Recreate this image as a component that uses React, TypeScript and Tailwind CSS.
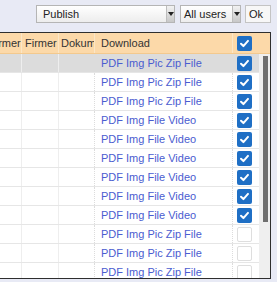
import React from "react";

const rows: { t: string; c: boolean; sel?: boolean }[] = [
  { t: "PDF Img Pic Zip File", c: true, sel: true },
  { t: "PDF Img Pic Zip File", c: true },
  { t: "PDF Img Pic Zip File", c: true },
  { t: "PDF Img File Video", c: true },
  { t: "PDF Img File Video", c: true },
  { t: "PDF Img File Video", c: true },
  { t: "PDF Img File Video", c: true },
  { t: "PDF Img File Video", c: true },
  { t: "PDF Img File Video", c: true },
  { t: "PDF Img Pic Zip File", c: false },
  { t: "PDF Img Pic Zip File", c: false },
  { t: "PDF Img Pic Zip File", c: false },
];

function Check({ on }: { on: boolean }) {
  if (!on)
    return <div className="w-[15px] h-[15px] rounded-[2px] border border-[#dedede] bg-white" />;
  return (
    <div className="w-[15px] h-[15px] rounded-[2px] bg-[#1f6fc5] flex items-center justify-center">
      <svg width="11" height="11" viewBox="0 0 12 12">
        <polyline points="2.2,6.3 4.8,8.8 9.8,3.2" fill="none" stroke="white" strokeWidth="2.2" strokeLinecap="round" strokeLinejoin="round" />
      </svg>
    </div>
  );
}

function Arrow() {
  return (
    <div className="w-[8px] h-[16px] bg-gradient-to-b from-[#f2f2f2] to-[#c8c8c8] border-l border-[#bdbdbd] flex items-center justify-center">
      <svg width="6" height="4" viewBox="0 0 6 4"><polygon points="0,0 6,0 3,4" fill="#222" /></svg>
    </div>
  );
}

export default function App() {
  return (
    <div
      className="w-[277px] h-[282px] bg-[#e8eaf5] overflow-hidden text-[11px] leading-none text-[#222]"
      style={{ fontFamily: '"Liberation Sans", Arial, sans-serif' }}
    >
      <div className="h-[32px] pt-[5px] flex items-start">
        <div className="ml-[36px] w-[139px] h-[18px] border border-[#b5b5b5] bg-gradient-to-b from-[#ffffff] to-[#ededed] flex items-center justify-between">
          <span className="pl-[6px]">Publish</span>
          <Arrow />
        </div>
        <div className="ml-[5px] w-[61px] h-[18px] border border-[#b5b5b5] bg-gradient-to-b from-[#ffffff] to-[#ededed] flex items-center justify-between">
          <span className="pl-[3px]">All users</span>
          <Arrow />
        </div>
        <div className="ml-[4px] w-[26px] h-[18px] border border-[#c4c4c4] bg-[#f7f7f7] flex items-center pl-[3px]">Ok</div>
      </div>
      <div className="ml-[-12px] w-[283px] h-[247px] border-t border-b border-r border-[#2e2e2e] overflow-hidden flex flex-col bg-white">
        <div className="h-[21px] shrink-0 flex bg-[#fcd9a9] text-[#333] border-b border-[#f3c98e]">
          <div className="w-[34px] border-r border-[#fbe6c6] flex items-center pl-[1px] overflow-hidden whitespace-nowrap">Firmer</div>
          <div className="w-[37px] border-r border-[#fbe6c6] flex items-center pl-[3px] overflow-hidden whitespace-nowrap">Firmer</div>
          <div className="w-[36px] border-r border-[#fbe6c6] flex items-center pl-[2px] overflow-hidden whitespace-nowrap">Dokument</div>
          <div className="w-[138px] border-r border-[#fbe6c6] flex items-center pl-[6px] overflow-hidden whitespace-nowrap">Download</div>
          <div className="w-[26px] flex items-center pl-[4px]"><Check on={true} /></div>
          <div className="w-[11px]" />
        </div>
        <div className="flex flex-1 min-h-0">
          <div className="flex flex-col w-[271px]">
            {rows.map((r, i) => (
              <div key={i} className={"h-[19px] shrink-0 flex border-b border-[#e6e6e6] " + (r.sel ? "bg-[#dcdcdc]" : "bg-white")}>
                <div className="w-[34px] border-r border-[#eeeeee]" />
                <div className="w-[37px] border-r border-[#eeeeee]" />
                <div className="w-[36px] border-r border-dotted border-[#dcdcdc]" />
                <div className="w-[138px] border-r border-dotted border-[#dcdcdc] flex items-center pl-[6px] text-[#4a5cd0] whitespace-nowrap">{r.t}</div>
                <div className="w-[26px] flex items-center pl-[4px]"><Check on={r.c} /></div>
              </div>
            ))}
          </div>
          <div className="w-[11px] bg-[#efefef] relative">
            <div className="absolute left-[4px] top-[2px] w-[5px] h-[166px] bg-[#6f6f6f]" />
          </div>
        </div>
      </div>
    </div>
  );
}
